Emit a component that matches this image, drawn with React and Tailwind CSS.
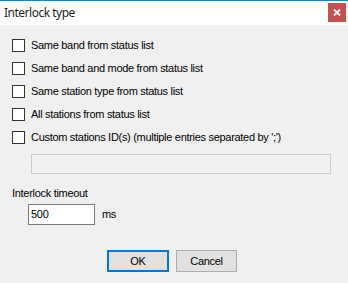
export default function App() {
  const items = [
    "Same band from status list",
    "Same band and mode from status list",
    "Same station type from status list",
    "All stations from status list",
    "Custom stations ID(s) (multiple entries separated by ';')",
  ];
  return (
    <div className="w-[348px] h-[283px] overflow-hidden bg-[#f0f0f0] flex flex-col tracking-[-0.3px]" style={{ fontFamily: '"Liberation Sans", Arial, sans-serif' }}>
      <div className="h-[25px] shrink-0 bg-white border-t border-[#1883d7] flex items-start justify-between">
        <div className="pl-[4px] pt-[5px] text-[12px] leading-[14px] tracking-[-0.5px] text-[#1e1e1e]" style={{ fontFamily: '"Noto Sans", "Open Sans", sans-serif' }}>
          Interlock type
        </div>
        <div className="mt-[2px] mr-[2px] w-[18px] h-[19px] bg-[#c75050] flex items-center justify-center">
          <svg width="8" height="7" viewBox="0 0 8 7">
            <path d="M1 0.5 L7 6.5 M7 0.5 L1 6.5" stroke="white" strokeWidth="1.8" />
          </svg>
        </div>
      </div>
      <div className="flex flex-col pl-[12px] pt-[9px] text-[11px] text-black">
        {items.map((t) => (
          <div key={t} className="h-[23px] flex items-center">
            <div className="w-[13px] h-[13px] border border-[#333333] bg-white shrink-0" />
            <span className="ml-[6px] leading-[13px]">{t}</span>
          </div>
        ))}
        <div className="ml-[19px] mt-[5px] w-[300px] h-[20px] border border-[#cccccc] bg-[#f0f0f0]" />
        <div className="mt-[13px] leading-[13px]">Interlock timeout</div>
        <div className="mt-[4px] ml-[16px] flex items-center">
          <div className="w-[67px] h-[21px] border border-[#7a7a7a] bg-white flex items-center pl-[2px] leading-[13px]">500</div>
          <span className="ml-[7px] leading-[13px]">ms</span>
        </div>
        <div className="mt-[25px] ml-[95px] flex gap-[7px]">
          <div className="w-[62px] h-[22px] border-2 border-[#0078d7] bg-[#e1e1e1] flex items-center justify-center leading-[13px]">OK</div>
          <div className="w-[61px] h-[22px] border border-[#adadad] bg-[#e1e1e1] flex items-center justify-center leading-[13px]">Cancel</div>
        </div>
      </div>
    </div>
  );
}
